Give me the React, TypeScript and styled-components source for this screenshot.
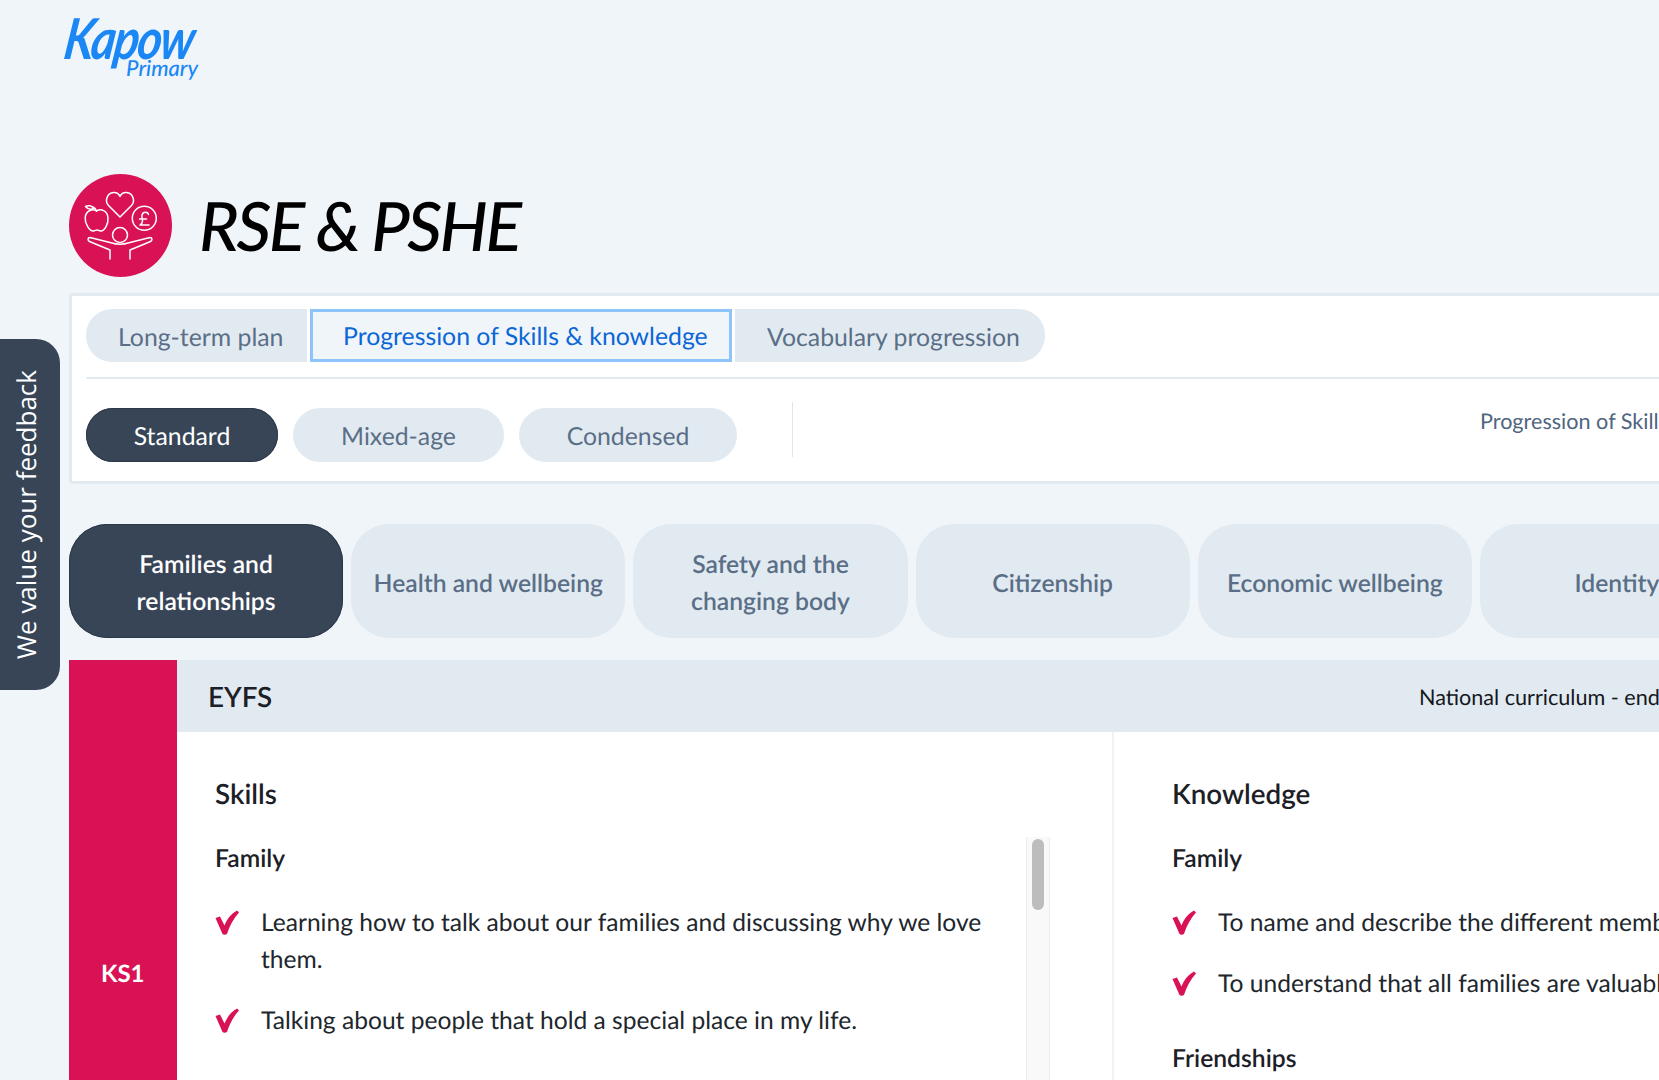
import React from "react";
import styled, { createGlobalStyle } from "styled-components";

const Global = createGlobalStyle`
  html, body { margin: 0; padding: 0; background: #f0f5fa; overflow: hidden; }
  #root { width: 1659px; height: 1080px; overflow: hidden; position: relative; }
  * { box-sizing: border-box; }
  body, button { text-rendering: geometricPrecision; font-variant-ligatures: common-ligatures; }
`;

const Page = styled.div`
  width: 2047px;
  padding: 15px 0 0 69px;
  font-family: Lato, "Liberation Sans", sans-serif;
  color: #1c2026;
`;

const Feedback = styled.div`
  position: absolute;
  left: 0;
  top: 339px;
  width: 60px;
  height: 351px;
  padding-right: 9px;
  background: #374557;
  border-radius: 0 24px 24px 0;
  display: flex;
  align-items: center;
  justify-content: center;
`;

const FeedbackText = styled.span`
  writing-mode: vertical-rl;
  transform: rotate(180deg);
  font-family: "Open Sans", sans-serif;
  font-size: 26px;
  color: #fff;
  white-space: nowrap;
`;

const Logo = styled.div`
  width: 129px;
  height: 65px;
  display: flex;
  flex-direction: column;
  color: #1a87f5;
  font-style: italic;
`;

const LogoWord = styled.div`
  font-family: Lato, sans-serif;
  font-weight: 700;
  font-size: 47px;
  line-height: 48px;
  letter-spacing: -1.8px;
  white-space: nowrap;
  transform: skewX(-8deg) scaleY(1.2);
  transform-origin: left center;
  margin-left: -4px;
`;

const LogoSub = styled.div`
  align-self: flex-end;
  margin-top: -7px;
  font-size: 22px;
  line-height: 24px;
  font-weight: 500;
  white-space: nowrap;
`;

const TitleRow = styled.div`
  display: flex;
  align-items: center;
  gap: 27px;
  margin-top: 94px;
  height: 103px;
`;

const Title = styled.h1`
  margin: 0;
  font-family: Lato, sans-serif;
  font-style: italic;
  font-weight: 500;
  font-size: 68px;
  line-height: 1;
  color: #000;
  letter-spacing: -2.5px;
  white-space: nowrap;
`;

const Card = styled.section`
  margin-top: 16px;
  height: 191px;
  background: #fff;
  border: 3px solid #e2eaf1;
  border-radius: 4px;
  padding: 13px 14px;
`;

const TabRow = styled.div`
  display: flex;
  gap: 3px;
`;

const Tab = styled.button<{ $active?: boolean; $pos?: "first" | "last"; $w: number }>`
  flex: 0 0 ${(p) => p.$w}px;
  height: 53px;
  padding: ${(p) => (p.$active ? "2px" : "4px")} 0 0 ${(p) => (p.$pos ? "32px" : "30px")};
  text-align: left;
  font: 400 24.8px Lato, sans-serif;
  white-space: nowrap;
  background: ${(p) => (p.$active ? "#f0f5fa" : "#e2eaf1")};
  color: ${(p) => (p.$active ? "#0b66d6" : "#5a6f87")};
  border: ${(p) => (p.$active ? "3px solid #8cc4fb" : "0")};
  border-radius: ${(p) =>
    p.$pos === "first" ? "26px 0 0 26px" : p.$pos === "last" ? "0 26px 26px 0" : "0"};
`;

const Rule = styled.hr`
  margin: 15px 0 29px;
  border: 0;
  height: 2px;
  background: #e2eaf1;
`;

const PillRow = styled.div`
  display: flex;
  align-items: flex-start;
  gap: 15px;
`;

const Pill = styled.button<{ $active?: boolean; $w: number }>`
  width: ${(p) => p.$w}px;
  height: 54px;
  padding: 2px 0 0;
  border-radius: 27px;
  border: 0;
  font: 400 24.8px Lato, sans-serif;
  background: ${(p) => (p.$active ? "#374557" : "#e2eaf1")};
  color: ${(p) => (p.$active ? "#fff" : "#5a6f87")};
  box-shadow: ${(p) => (p.$active ? "inset 0 0 0 1px #2b384a" : "none")};
`;

const VLine = styled.div`
  width: 1px;
  height: 55px;
  margin: -6px 0 0 40px;
  background: #dde6ee;
`;

const Note = styled.div`
  margin: -2px 0 0 672px;
  font-size: 21.6px;
  line-height: 30px;
  color: #4f6580;
  white-space: nowrap;
`;

const CategoryRow = styled.div`
  display: flex;
  gap: 8px;
  margin-top: 40px;
`;

const Category = styled.button<{ $active?: boolean }>`
  flex: 0 0 274.2px;
  height: 114px;
  border: 0;
  border-radius: 38px;
  padding: 4px 16px 0;
  font: 600 24.7px/37px Lato, sans-serif;
  background: ${(p) => (p.$active ? "#374557" : "#e2eaf1")};
  color: ${(p) => (p.$active ? "#fff" : "#5a6f87")};
  box-shadow: ${(p) => (p.$active ? "inset 0 0 0 1px #2b384a" : "none")};
`;

const Table = styled.div`
  display: grid;
  grid-template-columns: 107.5px 1fr;
  margin-top: 22px;
  min-height: 500px;
`;

const Stage = styled.div`
  background: #d91255;
  color: #fff;
  font-size: 24px;
  font-weight: 700;
  display: flex;
  align-items: flex-start;
  justify-content: center;
  padding-top: 299px;
`;

const Main = styled.div`
  background: #fff;
`;

const HeadBar = styled.div`
  height: 72px;
  background: #e2eaf1;
  display: flex;
  align-items: center;
  padding-left: 31.5px;
  font-size: 21.6px;
`;

const EyfsLabel = styled.div`
  font-size: 27.8px;
  font-weight: 600;
  width: 1211px;
`;

const Curriculum = styled.div`
  padding-top: 2px;
  white-space: nowrap;
  color: #14181d;
`;

const Columns = styled.div`
  display: grid;
  grid-template-columns: 935.5px 1fr;
`;

const Column = styled.div<{ $divider?: boolean }>`
  padding: 43px 0 0 ${(p) => (p.$divider ? "58px" : "38.5px")};
  border-left: ${(p) => (p.$divider ? "2px solid #eef3f8" : "0")};
  height: 348px;
  overflow: hidden;
`;

const ColTitle = styled.h2`
  margin: 0 0 24px;
  font-size: 27.8px;
  line-height: 38px;
  font-weight: 600;
`;

const ScrollArea = styled.div`
  display: flex;
  align-items: stretch;
  width: 834px;
  height: 300px;
`;

const ListBody = styled.div`
  flex: 0 0 811px;
  width: 811px;
`;

const Track = styled.div`
  flex: 0 0 23px;
  background: #f9f9f9;
  border-left: 1px solid #ececec;
  border-right: 1px solid #ececec;
  padding: 2px 5px;
`;

const Thumb = styled.div`
  width: 12px;
  height: 71px;
  border-radius: 6px;
  background: #bdbdbd;
`;

const GroupTitle = styled.h3<{ $top?: number }>`
  margin: ${(p) => p.$top ?? 0}px 0 0;
  padding-top: 2px;
  font-size: 24.7px;
  line-height: 40px;
  font-weight: 600;
  white-space: nowrap;
`;

const List = styled.ul<{ $wrap?: boolean }>`
  list-style: none;
  margin: 25px 0 0;
  padding: 0;
  white-space: ${(p) => (p.$wrap ? "normal" : "nowrap")};
`;

const Item = styled.li`
  display: flex;
  gap: 22px;
  font-size: 24.6px;
  line-height: 37px;
  color: #20262c;
  margin-bottom: 24px;
`;

const CheckBox = styled.svg`
  flex: 0 0 24px;
  width: 24px;
  height: 25px;
  margin-top: 6px;
`;

const Icon = () => (
  <svg width="103" height="103" viewBox="0 0 103 103" fill="none">
    <circle cx="51.5" cy="51.5" r="51.5" fill="#d91255" />
    <g stroke="#fff" strokeWidth="1.5" strokeLinecap="round" strokeLinejoin="round">
      <path d="M51 43 L39.5 31.5 C35.5 27 38 19 44.5 18.5 C47.5 18.3 50 20 51 22.5 C52 20 54.5 18.3 57.5 18.5 C64 19 66.5 27 62.5 31.5 Z" />
      <path d="M27.5 37 C24 34.5 17 36 16.2 43.5 C15.6 50 21 57.5 24.5 57 C26 56.8 27 56 28 56 C29 56 30 56.8 31.5 57 C35.5 57.5 39.5 50 39 44 C38.5 36 31.5 34.5 27.5 37 Z" />
      <path d="M27.5 37 C27 35 25.5 33.5 24 33 M16.5 32.5 C19 31 23 31.5 24.5 34.5 C22 35.5 18.5 35 16.5 32.5 Z" />
      <circle cx="75.3" cy="44.3" r="12" />
      <path d="M79.5 40.5 C79 37.5 74 37 73 41 C72.5 43 73.5 45 73.5 47 C73.5 49 72.5 50 71 51 L80 51 M70.5 45 L77.5 45" />
      <circle cx="51" cy="61" r="7.5" />
      <path d="M41 85 V76 L20.5 67.5 C18.5 66.5 18.5 63.5 21 63.5 L43 69 C47 70.5 55 70.5 59 69 L81 63.5 C83.5 63.5 83.5 66.5 81.5 67.5 L61 76 V85" />
    </g>
  </svg>
);

const Check = () => (
  <CheckBox viewBox="0 0 24 25">
    <path
      fill="#d91255"
      d="M0.5 8 L5 6.5 L9.5 15.5 C12 9.5 15.5 4 22 0.5 L24 2.5 C18.5 8.5 14.5 16 12 24 C10.5 25 8.5 25 7.5 24 Z"
    />
  </CheckBox>
);

const Row = ({ children }: { children: React.ReactNode }) => (
  <Item>
    <Check />
    <span>{children}</span>
  </Item>
);

export default function App() {
  return (
    <>
      <Global />
      <Feedback>
        <FeedbackText>We value your feedback</FeedbackText>
      </Feedback>
      <Page>
        <Logo>
          <LogoWord>Kapow</LogoWord>
          <LogoSub>Primary</LogoSub>
        </Logo>
        <TitleRow>
          <Icon />
          <Title>RSE &amp; PSHE</Title>
        </TitleRow>
        <Card>
          <TabRow>
            <Tab $pos="first" $w={221}>Long-term plan</Tab>
            <Tab $active $w={422}>Progression of Skills &amp; knowledge</Tab>
            <Tab $pos="last" $w={310}>Vocabulary progression</Tab>
          </TabRow>
          <Rule />
          <PillRow>
            <Pill $active $w={192}>Standard</Pill>
            <Pill $w={211}>Mixed-age</Pill>
            <Pill $w={218}>Condensed</Pill>
            <VLine />
            <Note>Progression of Skills &amp; knowledge</Note>
          </PillRow>
        </Card>
        <CategoryRow>
          <Category $active>Families and<br />relationships</Category>
          <Category>Health and wellbeing</Category>
          <Category>Safety and the<br />changing body</Category>
          <Category>Citizenship</Category>
          <Category>Economic wellbeing</Category>
          <Category>Identity</Category>
        </CategoryRow>
        <Table>
          <Stage>KS1</Stage>
          <Main>
            <HeadBar>
              <EyfsLabel>EYFS</EyfsLabel>
              <Curriculum>National curriculum - end of EYFS</Curriculum>
            </HeadBar>
            <Columns>
              <Column>
                <ColTitle>Skills</ColTitle>
                <ScrollArea>
                  <ListBody>
                    <GroupTitle>Family</GroupTitle>
                    <List $wrap>
                      <Row>Learning how to talk about our families and discussing why we love them.</Row>
                      <Row>Talking about people that hold a special place in my life.</Row>
                    </List>
                  </ListBody>
                  <Track>
                    <Thumb />
                  </Track>
                </ScrollArea>
              </Column>
              <Column $divider>
                <ColTitle>Knowledge</ColTitle>
                <GroupTitle>Family</GroupTitle>
                <List>
                  <Row>To name and describe the different members of a family.</Row>
                  <Row>To understand that all families are valuable and special.</Row>
                </List>
                <GroupTitle $top={35}>Friendships</GroupTitle>
              </Column>
            </Columns>
          </Main>
        </Table>
      </Page>
    </>
  );
}
